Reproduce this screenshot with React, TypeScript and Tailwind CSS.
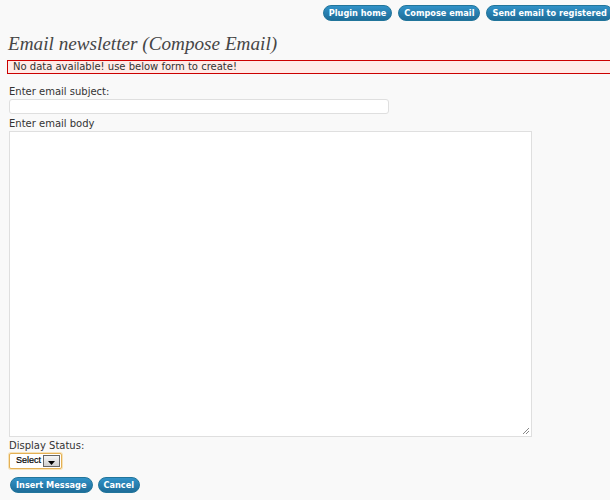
import React from "react";

const btn =
  "inline-flex items-center h-[16px] px-[5px] rounded-full text-white font-bold text-[8.2px] leading-none border border-[#21759b] bg-gradient-to-b from-[#3192c8] to-[#1e6d99] whitespace-nowrap";

export default function App() {
  return (
    <div
      className="w-[610px] h-[500px] bg-[#f9f9f9] overflow-hidden text-[#333]"
      style={{ fontFamily: '"DejaVu Sans", Verdana, sans-serif' }}
    >
      <div className="flex justify-end gap-[6px] pt-[5px] mr-[-3px]">
        <span className={btn}>Plugin home</span>
        <span className={btn}>Compose email</span>
        <span className={btn}>Send email to registered</span>
      </div>
      <h2
        className="ml-[8px] mt-[13px] text-[19.2px] italic text-[#464646] leading-none"
        style={{ fontFamily: '"Liberation Serif", Georgia, serif' }}
      >
        Email newsletter (Compose Email)
      </h2>
      <div className="mt-[7px] ml-[7px] mr-[-10px] h-[14px] border border-[#cc0000] bg-[#ffebe8] pl-[5px] text-[10px] leading-[12px] text-[#333]">
        No data available! use below form to create!
      </div>
      <div className="pl-[9px] text-[10px]">
        <div className="mt-[11px] leading-[13px]">Enter email subject:</div>
        <div className="mt-[1px] w-[380px] h-[15px] bg-white border border-[#dfdfdf] rounded-[3px]"></div>
        <div className="mt-[3px] leading-[13px]">Enter email body</div>
        <div className="relative mt-[1px] w-[523px] h-[306px] bg-white border border-[#dfdfdf]">
          <svg className="absolute right-[1px] bottom-[1px]" width="8" height="8" viewBox="0 0 8 8">
            <path d="M7 1 L1 7 M7 4 L4 7" stroke="#888" strokeWidth="1" />
          </svg>
        </div>
        <div className="mt-[2px] leading-[13px]">Display Status:</div>
        <div className="mt-[1px] w-[53px] h-[16px] border border-[#e4b054] rounded-[2px] bg-white flex items-center justify-between pl-[6px] pr-[1px] shadow-[0_0_0_1px_#f6e2b8]">
          <span className="text-[9px] text-black font-medium" style={{ fontFamily: '"Liberation Sans", Arial, sans-serif', WebkitTextStroke: "0.2px #000" }}>Select</span>
          <span className="w-[17px] h-[12px] border border-[#666] bg-gradient-to-b from-[#f6f6f6] to-[#cfcfcf] flex items-end justify-center pb-[1px]">
            <svg width="7" height="4" viewBox="0 0 7 4"><path d="M0 0 H7 L3.5 4 Z" fill="#000" /></svg>
          </span>
        </div>
        <div className="flex gap-[5px] mt-[8px] ml-[1px]">
          <span className={btn}>Insert Message</span>
          <span className={btn}>Cancel</span>
        </div>
      </div>
    </div>
  );
}
